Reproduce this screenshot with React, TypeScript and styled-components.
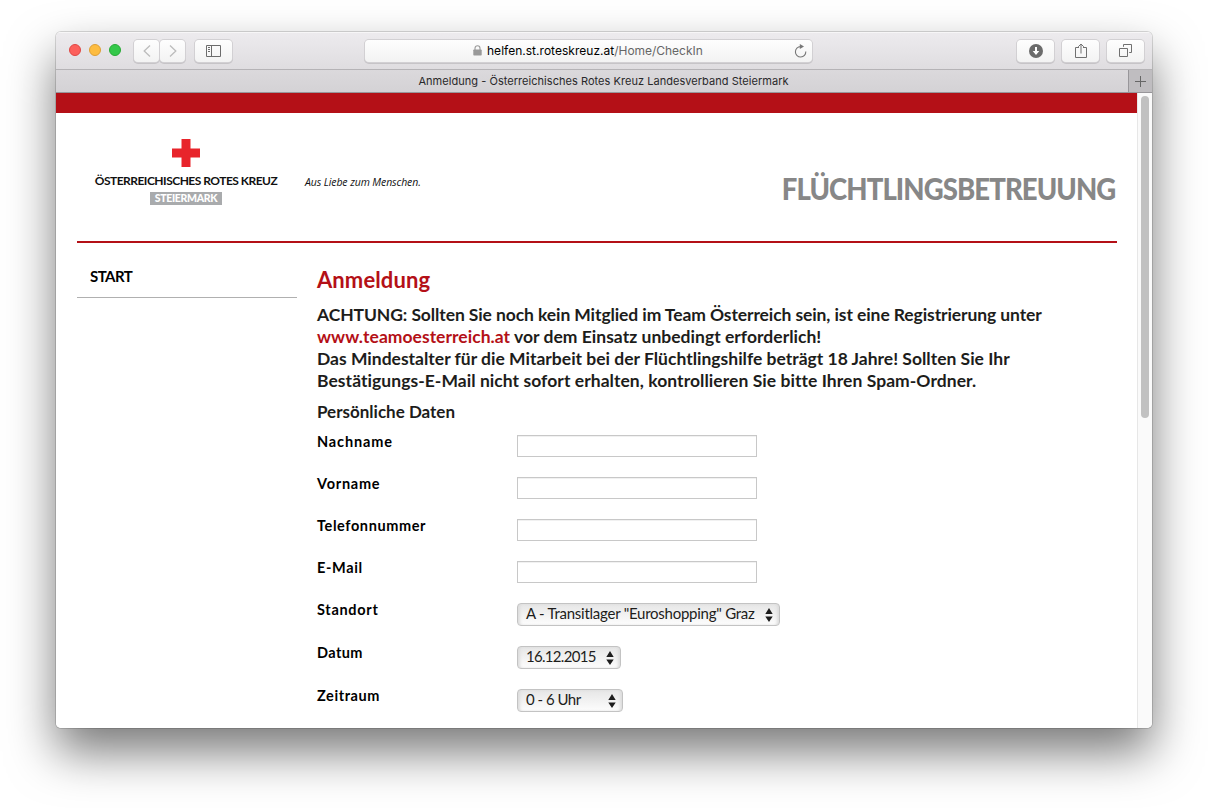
import React from 'react';
import styled, { createGlobalStyle } from 'styled-components';

const GlobalStyle = createGlobalStyle`
  * { box-sizing: border-box; }
  body { margin: 0; background: #fff; overflow: hidden; }
`;

const Desktop = styled.div`
  width: 1208px;
  height: 808px;
  padding: 32px 56px 80px;
  background: #fff;
`;

const Window = styled.div`
  width: 1096px;
  height: 696px;
  display: flex;
  flex-direction: column;
  overflow: hidden;
  background: #fff;
  border-radius: 5px;
  font-family: Lato, 'Liberation Sans', sans-serif;
  box-shadow: 0 0 0 1px rgba(0, 0, 0, 0.14), 0 24px 48px rgba(0, 0, 0, 0.53);
`;

const Toolbar = styled.div`
  flex: none;
  height: 38px;
  display: flex;
  align-items: center;
  padding: 0 8px 0 13px;
  background: linear-gradient(#edebee, #dfdde0);
  border-bottom: 1px solid #b5b3b6;
  box-shadow: inset 0 1px 0 #f7f6f7;
`;

const Lights = styled.div`
  display: flex;
  gap: 8px;
  margin: 0 13px 2px 0;
`;

const Light = styled.span<{ $fill: string; $edge: string }>`
  width: 12px;
  height: 12px;
  border-radius: 50%;
  background: ${(p) => p.$fill};
  border: 1px solid ${(p) => p.$edge};
`;

const ToolButton = styled.button<{ $width: number; $gap?: number }>`
  flex: none;
  width: ${(p) => p.$width}px;
  height: 22px;
  margin: 0 ${(p) => p.$gap ?? 0}px 0 0;
  padding: 0;
  display: flex;
  align-items: center;
  justify-content: center;
  border: 0;
  border-radius: 4px;
  background: linear-gradient(#fefefe, #f3f3f3);
  box-shadow: 0 0 0 1px #d2d0d3, 0 1px 0 1px #c6c4c7;
`;

const AddressField = styled.div`
  flex: none;
  width: 447px;
  height: 22px;
  margin-left: 133px;
  margin-right: auto;
  padding: 0 5px 0 108px;
  display: flex;
  align-items: center;
  border-radius: 4px;
  background: linear-gradient(#fefefe, #f3f3f3);
  box-shadow: 0 0 0 1px #d2d0d3, 0 1px 0 1px #c6c4c7;
  font: 12px/22px Inter, sans-serif;
  color: #666;
  white-space: nowrap;
`;

const Host = styled.span`
  margin-left: 5px;
  color: #000;
  letter-spacing: 0.02px;
`;

const Path = styled.span`
  margin-right: auto;
  letter-spacing: -0.03px;
`;

const TabBar = styled.div`
  flex: none;
  height: 23px;
  display: flex;
  background: linear-gradient(#dbd9dc, #d4d2d5);
  border-bottom: 1px solid #98969a;
`;

const Tab = styled.div`
  flex: 1;
  padding-left: 23px;
  text-align: center;
  font: 11px/23px Inter, sans-serif;
  letter-spacing: 0.04px;
  color: #29282a;
`;

const NewTab = styled.button`
  width: 24px;
  padding: 0;
  border: 0;
  border-left: 1px solid #98969a;
  background: #bfbdc0;
  display: flex;
  align-items: center;
  justify-content: center;
`;

const Viewport = styled.div`
  flex: 1;
  min-height: 0;
  display: flex;
`;

const Page = styled.main`
  width: 1081px;
  border-top: 20px solid #b41017;
  padding: 0 20px 0 21px;
  background: #fff;
`;

const ScrollTrack = styled.div`
  flex: 1;
  padding: 3px 0 0 3px;
  background: #fafafa;
  border-left: 1px solid #e7e7e7;
`;

const ScrollThumb = styled.div`
  width: 8px;
  height: 322px;
  border-radius: 4px;
  background: #c1c1c1;
`;

const Header = styled.header`
  height: 130px;
  display: flex;
  padding: 26px 0 0 17px;
  border-bottom: 2px solid #b41017;
`;

const Logo = styled.div`
  width: 184px;
  display: flex;
  flex-direction: column;
  align-items: center;
  white-space: nowrap;
`;

const LogoName = styled.div`
  margin-top: 6px;
  font-size: 12px;
  font-weight: 700;
  line-height: 16px;
  letter-spacing: -0.51px;
  color: #111;
`;

const Region = styled.div`
  margin-top: 3px;
  width: 72px;
  height: 13px;
  background: #a9abad;
  color: #fff;
  font-size: 10.5px;
  font-weight: 900;
  line-height: 13px;
  letter-spacing: -0.3px;
  text-align: center;
`;

const Slogan = styled.div`
  margin: 35px 0 0 27px;
  font: italic 400 10.5px/16px 'Open Sans', sans-serif;
  letter-spacing: -0.1px;
  color: #111;
  white-space: nowrap;
`;

const Title = styled.h1`
  margin: 31px 2px 0 auto;
  font-size: 30px;
  font-weight: 900;
  line-height: 36px;
  letter-spacing: -1px;
  color: #878787;
  transform: scaleX(0.918);
  transform-origin: right;
`;

const Columns = styled.div`
  display: flex;
  gap: 20px;
`;

const Nav = styled.nav`
  width: 220px;
`;

const NavLink = styled.a`
  display: block;
  height: 55px;
  padding: 22px 13px 0;
  border-bottom: 1px solid #b0b0b0;
  font-size: 15px;
  font-weight: 700;
  line-height: 22px;
  letter-spacing: -0.55px;
  color: #000;
`;

const Content = styled.section`
  width: 800px;
`;

const Heading = styled.h2`
  margin: 22px 0 9px;
  font-size: 22px;
  font-weight: 700;
  line-height: 30px;
  letter-spacing: 0.1px;
  color: #b41017;
`;

const Notice = styled.div`
  color: #1d1d1b;
  font-size: 17.5px;
  font-weight: 700;
  line-height: 22px;
  white-space: nowrap;
`;

const Line = styled.div<{ $spacing: number }>`
  letter-spacing: ${(p) => p.$spacing}px;
`;

const RedLink = styled.a<{ $spacing: number }>`
  color: #b41017;
  letter-spacing: ${(p) => p.$spacing}px;
`;

const Legend = styled.h3`
  margin: 9px 0 12px;
  font-size: 17px;
  font-weight: 700;
  line-height: 22px;
  color: #1d1d1b;
`;

const Row = styled.div`
  display: flex;
  align-items: flex-start;
  margin-bottom: 20px;
`;

const Label = styled.label<{ $spacing: number }>`
  width: 200px;
  font-size: 14.5px;
  font-weight: 700;
  line-height: 14px;
  letter-spacing: ${(p) => p.$spacing}px;
  color: #000;
`;

const Input = styled.input`
  width: 240px;
  height: 22px;
  padding: 0 4px;
  border: 1px solid #c8c8c8;
  background: #fff;
  box-shadow: inset 0 1px 0 #f1f1f1;
`;

const Select = styled.div<{ $width: number; $spacing: number }>`
  width: ${(p) => p.$width}px;
  height: 23px;
  padding: 0 6px 0 8px;
  display: flex;
  align-items: center;
  justify-content: space-between;
  border: 1px solid #c3c3c3;
  border-radius: 4px;
  background: linear-gradient(#e6e6e6, #fdfdfd);
  box-shadow: inset 3px 0 3px -1px #dcdcdc, inset -3px 0 3px -1px #dcdcdc;
  font-size: 15px;
  line-height: 21px;
  letter-spacing: ${(p) => p.$spacing}px;
  color: #1d1d1b;
  white-space: nowrap;
`;

const SelectValue = styled.span`
  padding-bottom: 2px;
  line-height: 19px;
`;

const Stepper = () => (
  <svg width="8" height="14" viewBox="0 0 8 14" fill="#1d1d1d">
    <path d="M4 0 7.7 6H.3zM4 14 .3 8.5h7.4z" />
  </svg>
);

const fields = [
  { label: 'Nachname', spacing: 0.85 },
  { label: 'Vorname', spacing: 0.75 },
  { label: 'Telefonnummer', spacing: 0.6 },
  { label: 'E-Mail', spacing: 0.65 },
];

const choices = [
  { label: 'Standort', spacing: 0.7, value: 'A - Transitlager "Euroshopping" Graz', width: 263, valueSpacing: -0.25 },
  { label: 'Datum', spacing: 0.4, value: '16.12.2015', width: 104, valueSpacing: -0.7 },
  { label: 'Zeitraum', spacing: 0.6, value: '0 - 6 Uhr', width: 106, valueSpacing: -0.5 },
];

export default function App() {
  return (
    <Desktop>
      <GlobalStyle />
      <Window>
        <Toolbar>
          <Lights>
            <Light $fill="#fc605c" $edge="#df4744" />
            <Light $fill="#fdbc40" $edge="#de9f34" />
            <Light $fill="#34c84a" $edge="#27aa35" />
          </Lights>
          <ToolButton $width={25} $gap={1} aria-label="Zurück">
            <svg width="8" height="14" viewBox="0 0 8 14" fill="none" stroke="#bcbcbc" strokeWidth="1.3">
              <path d="M7 1.5 1.2 7 7 12.5" />
            </svg>
          </ToolButton>
          <ToolButton $width={25} $gap={10} aria-label="Vor">
            <svg width="8" height="14" viewBox="0 0 8 14" fill="none" stroke="#bcbcbc" strokeWidth="1.3">
              <path d="M1 1.5 6.8 7 1 12.5" />
            </svg>
          </ToolButton>
          <ToolButton $width={37} aria-label="Seitenleiste">
            <svg width="15" height="12" viewBox="0 0 15 12" fill="none" stroke="#6c6c6c">
              <path d="M.5.5h14v11H.5zM5.5.5v11M2 2.5h2M2 4.5h2M2 6.5h2" />
            </svg>
          </ToolButton>
          <AddressField>
            <svg width="9" height="11" viewBox="0 0 9 11">
              <rect x=".3" y="4.5" width="8.4" height="6" rx=".8" fill="#999" />
              <path d="M2 5V3.2a2.5 2.5 0 0 1 5 0V5" fill="none" stroke="#999" strokeWidth="1.1" />
            </svg>
            <Host>helfen.st.roteskreuz.at</Host>
            <Path>/Home/CheckIn</Path>
            <svg width="13" height="14" viewBox="0 0 13 14" fill="none" stroke="#777" strokeWidth="1.1">
              <path d="M11.8 7.5A5.2 5.2 0 1 1 6.6 2.6h1.2" />
              <path d="M5.8 0 10 2.6 5.8 5z" fill="#777" stroke="none" />
            </svg>
          </AddressField>
          <ToolButton $width={37} $gap={8} aria-label="Downloads">
            <svg width="14" height="14" viewBox="0 0 14 14">
              <circle cx="7" cy="7" r="7" fill="#6b6b6b" />
              <path d="M6 3h2v4h2.3L7 11 3.7 7H6z" fill="#fff" />
            </svg>
          </ToolButton>
          <ToolButton $width={37} $gap={8} aria-label="Teilen">
            <svg width="12" height="16" viewBox="0 0 12 16" fill="none" stroke="#707070">
              <path d="M4 4.5H.5v10h11v-10H8M6 10.5V1M3.2 3.8 6 1l2.8 2.8" />
            </svg>
          </ToolButton>
          <ToolButton $width={37} aria-label="Tabs">
            <svg width="13" height="13" viewBox="0 0 13 13" fill="none" stroke="#707070">
              <path d="M.5 4.5h8v8h-8zM4.5 2.8V.5h8v8h-2.3" />
            </svg>
          </ToolButton>
        </Toolbar>
        <TabBar>
          <Tab>Anmeldung - Österreichisches Rotes Kreuz Landesverband Steiermark</Tab>
          <NewTab aria-label="Neuer Tab">
            <svg width="11" height="11" viewBox="0 0 11 11" stroke="#666">
              <path d="M5.5 0v11M0 5.5h11" />
            </svg>
          </NewTab>
        </TabBar>
        <Viewport>
          <Page>
            <Header>
              <Logo>
                <svg width="28" height="28" viewBox="0 0 28 28" fill="#e8242b">
                  <path d="M9.5 0h9v9.5H28v9h-9.5V28h-9v-9.5H0v-9h9.5z" />
                </svg>
                <LogoName>ÖSTERREICHISCHES ROTES KREUZ</LogoName>
                <Region>STEIERMARK</Region>
              </Logo>
              <Slogan>Aus Liebe zum Menschen.</Slogan>
              <Title>FLÜCHTLINGSBETREUUNG</Title>
            </Header>
            <Columns>
              <Nav>
                <NavLink>START</NavLink>
              </Nav>
              <Content>
                <Heading>Anmeldung</Heading>
                <Notice>
                  <Line $spacing={-0.1}>ACHTUNG: Sollten Sie noch kein Mitglied im Team Österreich sein, ist eine Registrierung unter</Line>
                  <Line $spacing={0.02}>
                    <RedLink $spacing={0.03}>www.teamoesterreich.at</RedLink> vor dem Einsatz unbedingt erforderlich!
                  </Line>
                  <Line $spacing={0}>Das Mindestalter für die Mitarbeit bei der Flüchtlingshilfe beträgt 18 Jahre! Sollten Sie Ihr</Line>
                  <Line $spacing={0.05}>Bestätigungs-E-Mail nicht sofort erhalten, kontrollieren Sie bitte Ihren Spam-Ordner.</Line>
                </Notice>
                <Legend>Persönliche Daten</Legend>
                {fields.map((f) => (
                  <Row key={f.label}>
                    <Label $spacing={f.spacing}>{f.label}</Label>
                    <Input aria-label={f.label} />
                  </Row>
                ))}
                {choices.map((c) => (
                  <Row key={c.label}>
                    <Label $spacing={c.spacing}>{c.label}</Label>
                    <Select $width={c.width} $spacing={c.valueSpacing}>
                      <SelectValue>{c.value}</SelectValue>
                      <Stepper />
                    </Select>
                  </Row>
                ))}
              </Content>
            </Columns>
          </Page>
          <ScrollTrack>
            <ScrollThumb />
          </ScrollTrack>
        </Viewport>
      </Window>
    </Desktop>
  );
}
